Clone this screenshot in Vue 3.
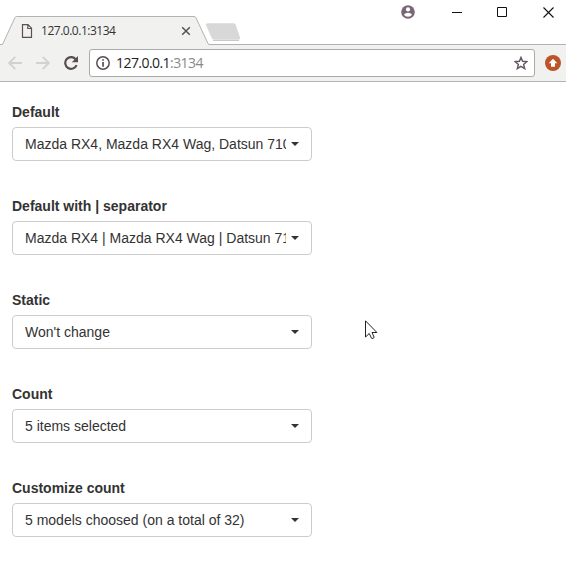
<script setup>
const fields = [
  { label: 'Default', value: 'Mazda RX4, Mazda RX4 Wag, Datsun 710, Hornet 4 Drive' },
  { label: 'Default with | separator', value: 'Mazda RX4 | Mazda RX4 Wag | Datsun 710 | Hornet 4 Drive' },
  { label: 'Static', value: "Won't change" },
  { label: 'Count', value: '5 items selected' },
  { label: 'Customize count', value: '5 models choosed (on a total of 32)' },
]
</script>

<template>
  <div class="window">
    <header class="titlebar">
      <svg class="frame" width="566" height="45" viewBox="0 0 566 45">
        <path d="M0 44.5H2.5L15 17.5Q15.500 16.500 16.500 16.500H194Q195.300 16.500 195.800 17.500L208.500 44.500H566V46H0Z" fill="#f1f1f0" stroke="#b2b2b2" />
        <path d="M208 23.300H233.500Q235 23.300 235.700 24.700L240 37.500Q240.500 39.800 238.500 39.800H214.500Q212.500 39.800 211.800 38.300L206 25Q205.400 23.300 208 23.300Z" fill="#d8d8d8" />
        <path d="M213 40.500H239" stroke="#c9c9c9" fill="none" />
      </svg>
      <div class="tab">
        <svg width="12" height="14" viewBox="0 0 12 14" fill="none" stroke="#5a5054" stroke-width="1.200">
          <path d="M1.500 .7H7L10.500 4.200V13.300H1.500ZM6.800 .9V4.500H10.300" />
        </svg>
        <span class="tab-title">127.0.0.1:3134</span>
        <svg width="10" height="10" viewBox="0 0 10 10" stroke="#555052" stroke-width="1.500"><path d="M1.200 1.200L8.800 8.800M8.800 1.200L1.200 8.800" /></svg>
      </div>
      <div class="controls">
        <svg width="14" height="14" viewBox="0 0 14 14"><circle cx="7" cy="7" r="6.800" fill="#7b6577" /><circle cx="7" cy="4.400" r="2.100" fill="#fff" /><path d="M2.900 9.700Q4.300 7.800 7 7.800T11.100 9.700Q9.700 11.800 7 11.800T2.900 9.700Z" fill="#fff" /></svg>
        <svg width="10" height="12" viewBox="0 0 10 12"><path d="M0 6.500H10" stroke="#111" /></svg>
        <svg width="10" height="10" viewBox="0 0 10 10"><path d="M.5 .5H9.500V9.500H.5Z" fill="none" stroke="#111" /></svg>
        <svg width="11" height="11" viewBox="0 0 11 11"><path d="M.5 .5L10.500 10.500M10.500 .5L.5 10.500" stroke="#111" stroke-width="1.100" /></svg>
      </div>
    </header>
    <nav class="toolbar">
      <svg width="14" height="14" viewBox="0 0 14 14" fill="none" stroke="#d2d2d2" stroke-width="1.900"><path d="M14 7H1.500M7.300 .8L1.200 7L7.300 13.200" /></svg>
      <svg width="14" height="14" viewBox="0 0 14 14" fill="none" stroke="#d2d2d2" stroke-width="1.900"><path d="M0 7H12.500M6.700 .8L12.800 7L6.700 13.200" /></svg>
      <svg width="15" height="14" viewBox="0 0 15 14"><path d="M11.700 3.200A5.900 5.900 0 1 0 12.600 9.200" fill="none" stroke="#5a4d54" stroke-width="2.200" /><path d="M14 0V6.300H7.800Z" fill="#5a4d54" /></svg>
      <div class="address">
        <svg width="14" height="14" viewBox="0 0 14 14"><circle cx="7" cy="7" r="6.200" fill="none" stroke="#5a4d54" stroke-width="1.500" /><path d="M6.200 3.200H7.900V4.800H6.200ZM6.200 6H7.900V10.800H6.200Z" fill="#5a4d54" /></svg>
        <span class="url">127.0.0.1<span class="port">:3134</span></span>
        <svg width="14" height="14" viewBox="0 0 14 14"><path d="M7 1.400L8.600 5.300L12.900 5.600L9.600 8.400L10.700 12.600L7 10.300L3.300 12.600L4.400 8.400L1.100 5.600L5.400 5.300Z" fill="none" stroke="#625660" stroke-width="1.400" /></svg>
      </div>
      <svg width="16" height="16" viewBox="0 0 16 16"><circle cx="8" cy="8" r="8" fill="#bc5429" /><path d="M8 3.800L12.300 8.200H10V11.800H6V8.200H3.700Z" fill="#fff" /></svg>
    </nav>
    <main class="form">
      <div v-for="field in fields" :key="field.label" class="group">
        <label>{{ field.label }}</label>
        <button type="button">
          <span class="value">{{ field.value }}</span>
          <span class="caret"></span>
        </button>
      </div>
    </main>
    <svg class="cursor" width="13" height="20" viewBox="0 0 13 20"><path d="M.5 .8V17L4.200 13.500L6.600 18.300Q8 19 9.200 17.400L7 12.500H11.900Z" fill="#fff" stroke="#222" /></svg>
  </div>
</template>

<style>
body { margin: 0; background: #fff; overflow: hidden; }
</style>

<style scoped>
.window { position: relative; width: 566px; height: 563px; background: #fff; color: #333; overflow: hidden; }
svg { display: block; flex: none; }
.titlebar { position: relative; display: flex; justify-content: space-between; height: 45px; }
.frame { position: absolute; left: 0; top: 0; }
.tab { position: relative; display: flex; align-items: center; width: 170px; height: 28px; margin-top: 17px; padding-left: 21px; }
.tab-title { flex: 1; margin-left: 8px; font: 12px/18px "Open Sans", sans-serif; letter-spacing: -.48px; }
.controls { position: relative; display: flex; align-items: center; height: 24px; padding-right: 12px; }
.controls svg + svg { margin-left: 37px; }
.controls svg:nth-child(3) { margin-left: 35px; }
.controls svg:nth-child(4) { margin-left: 36px; }
.toolbar { display: flex; align-items: center; box-sizing: border-box; height: 37px; padding: 0 5px 0 8px; background: #f1f1f0; border-bottom: 1px solid #b4b4b4; }
.toolbar > svg:nth-child(2) { margin-left: 14px; }
.toolbar > svg:nth-child(3) { margin-left: 14px; }
.address { display: flex; align-items: center; flex: 1; box-sizing: border-box; height: 28px; margin: 0 10px; padding: 0 6px; border: 1px solid #aaa; border-radius: 3px; background: #fff; }
.url { flex: 1; margin-left: 6px; font: 14px/20px "Open Sans", sans-serif; letter-spacing: -.56px; color: #222; }
.port { color: #888; }
.form { display: flex; flex-direction: column; gap: 35px; width: 300px; padding: 20px 12px; font: 14px/20px "Liberation Sans", Arial, sans-serif; }
.group { display: flex; flex-direction: column; gap: 5px; }
label { font-weight: 700; }
button { display: flex; align-items: center; box-sizing: border-box; width: 300px; height: 34px; padding: 0 12px; border: 1px solid #ccc; border-radius: 4px; background: #fff; color: #333; font: inherit; text-align: left; }
.value { flex: 1; min-width: 0; margin-right: 5px; overflow: hidden; white-space: nowrap; }
.caret { flex: none; border: 4px solid transparent; border-top-color: #333; border-bottom: 0; }
.cursor { position: absolute; left: 365px; top: 320px; }
</style>
